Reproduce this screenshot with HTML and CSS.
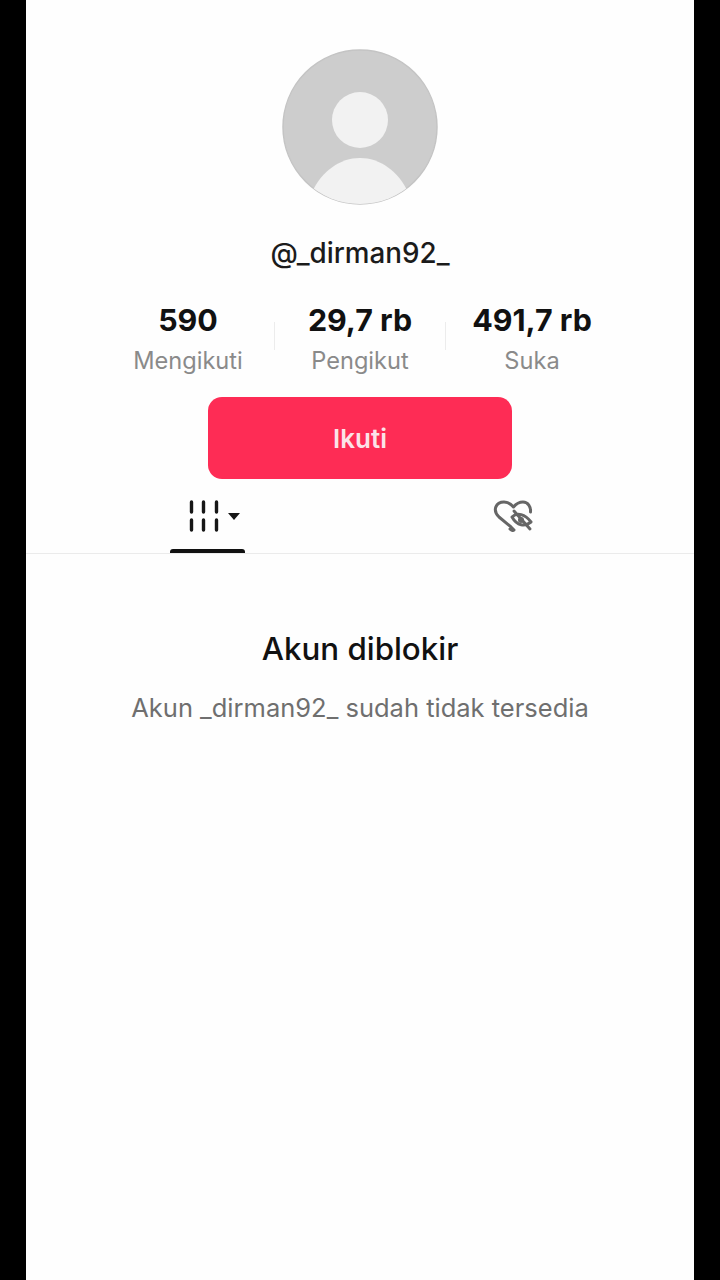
FILE: index.html
```html
<!DOCTYPE html>
<html lang="id">
<head>
  <meta charset="UTF-8" />
  <meta name="viewport" content="width=device-width, initial-scale=1.0" />
  <title>Akun diblokir</title>
  <link rel="stylesheet" href="styles.css">
</head>
<body>

  <main class="phone">
    <div class="avatar">
      <svg viewBox="0 0 156 156" width="156" height="156">
        <defs>
          <clipPath id="avatar-clip"><circle cx="78" cy="78" r="77"/></clipPath>
        </defs>
        <circle cx="78" cy="78" r="77" fill="#cdcdcd" stroke="#c4c4c4" stroke-width="1.5"/>
        <circle cx="78" cy="71" r="28" fill="#f2f2f2"/>
        <g clip-path="url(#avatar-clip)">
          <path d="M30 143C40 122 58 109 78 109C98 109 116 122 126 143C112 150 96 156 78 156C60 156 44 150 30 143Z" fill="#f2f2f2"/>
        </g>
      </svg>
    </div>

    <h1 class="username">@_dirman92_</h1>

    <div class="stats">
      <div class="stat">
        <strong>590</strong>
        <span>Mengikuti</span>
      </div>
      <div class="stat stat-divided">
        <strong>29,7 rb</strong>
        <span>Pengikut</span>
      </div>
      <div class="stat stat-divided">
        <strong>491,7 rb</strong>
        <span>Suka</span>
      </div>
    </div>

    <button class="follow-btn">Ikuti</button>

    <div class="tabs">
      <div class="tab tab-active">
        <svg viewBox="0 0 52 34" width="52" height="34">
          <path d="M3.5 3V13M15.5 3V13M28.5 3V13M3.5 21V31M15.5 21V31M28.5 21V31" stroke="#161616" stroke-width="3.4" stroke-linecap="round"/>
          <path d="M40 14H52L46 21Z" fill="#161616"/>
        </svg>
      </div>
      <div class="tab tab-liked">
        <svg viewBox="0 0 40 34" width="40" height="34" fill="none" stroke="#666" stroke-width="3">
          <path d="M17 30C18 31 20 32 21 31L18 28L6 18C-1 11 3 3 11 3C15 3 18 5 20.5 8C23 5 26 3 30 3C35 3 38 8 37.5 13" stroke-linecap="round" stroke-linejoin="round"/>
          <path d="M19 18C24 13 32 15 38 23C32 28 24 27 19 18Z" stroke-linejoin="round"/>
          <path d="M21 12L37 30" stroke-linecap="round"/>
          <circle cx="28" cy="21" r="3" fill="#666" stroke="none"/>
        </svg>
      </div>
    </div>

    <section class="blocked">
      <h2>Akun diblokir</h2>
      <p>Akun _dirman92_ sudah tidak tersedia</p>
    </section>
  </main>

</body>
</html>
```

FILE: styles.css
```css
* {
  box-sizing: border-box;
}

html,
body {
  height: 100%;
}

body {
  margin: 0;
  background: #000;
  font-family: "Inter", "Liberation Sans", sans-serif;
  overflow: hidden;
}

.phone {
  width: 668px;
  height: 1280px;
  margin: 0 auto;
  padding-top: 49px;
  background: #fefefe;
  display: flex;
  flex-direction: column;
  align-items: center;
}

.avatar {
  width: 156px;
  height: 156px;
}

.avatar svg {
  display: block;
}

.username {
  margin: 31px 0 0;
  height: 34px;
  line-height: 34px;
  font-size: 27.8px;
  font-weight: 500;
  color: #1b1b1b;
}

.stats {
  display: flex;
  margin-top: 31px;
}

.stat {
  width: 172px;
  display: flex;
  flex-direction: column;
  align-items: center;
  position: relative;
}

.stat-divided::before {
  content: "";
  position: absolute;
  left: 0;
  top: 21px;
  height: 28px;
  width: 1px;
  background: #ececec;
}

.stat-divided + .stat-divided::before {
  left: -1px;
}

.stat strong {
  line-height: 38px;
  font-size: 30.4px;
  font-weight: 700;
  color: #111;
}

.stat span {
  margin-top: 7px;
  line-height: 30px;
  font-size: 23.6px;
  color: #8a8a8a;
}

.follow-btn {
  width: 304px;
  height: 82px;
  margin-top: 21px;
  border: none;
  border-radius: 14px;
  background: #fe2c55;
  color: #fbe3e8;
  font-family: inherit;
  font-size: 26px;
  font-weight: 600;
}

.tabs {
  width: 100%;
  height: 75px;
  display: flex;
  border-bottom: 1px solid #ebebeb;
}

.tab {
  width: 50%;
  display: flex;
  justify-content: center;
  padding-top: 20px;
  position: relative;
}

.tab-active {
  padding-left: 42px;
}

.tab-liked {
  padding-right: 28px;
}

.tab-active::after {
  content: "";
  position: absolute;
  left: 144px;
  bottom: 0;
  width: 75px;
  height: 4px;
  border-radius: 3px 3px 0 0;
  background: #111;
}

.blocked {
  text-align: center;
  margin-top: 75px;
}

.blocked h2 {
  margin: 0;
  line-height: 40px;
  font-size: 31.3px;
  font-weight: 500;
  color: #111;
}

.blocked p {
  margin: 23px 0 0;
  line-height: 32px;
  font-size: 25.5px;
  color: #6f6f6f;
}
```
